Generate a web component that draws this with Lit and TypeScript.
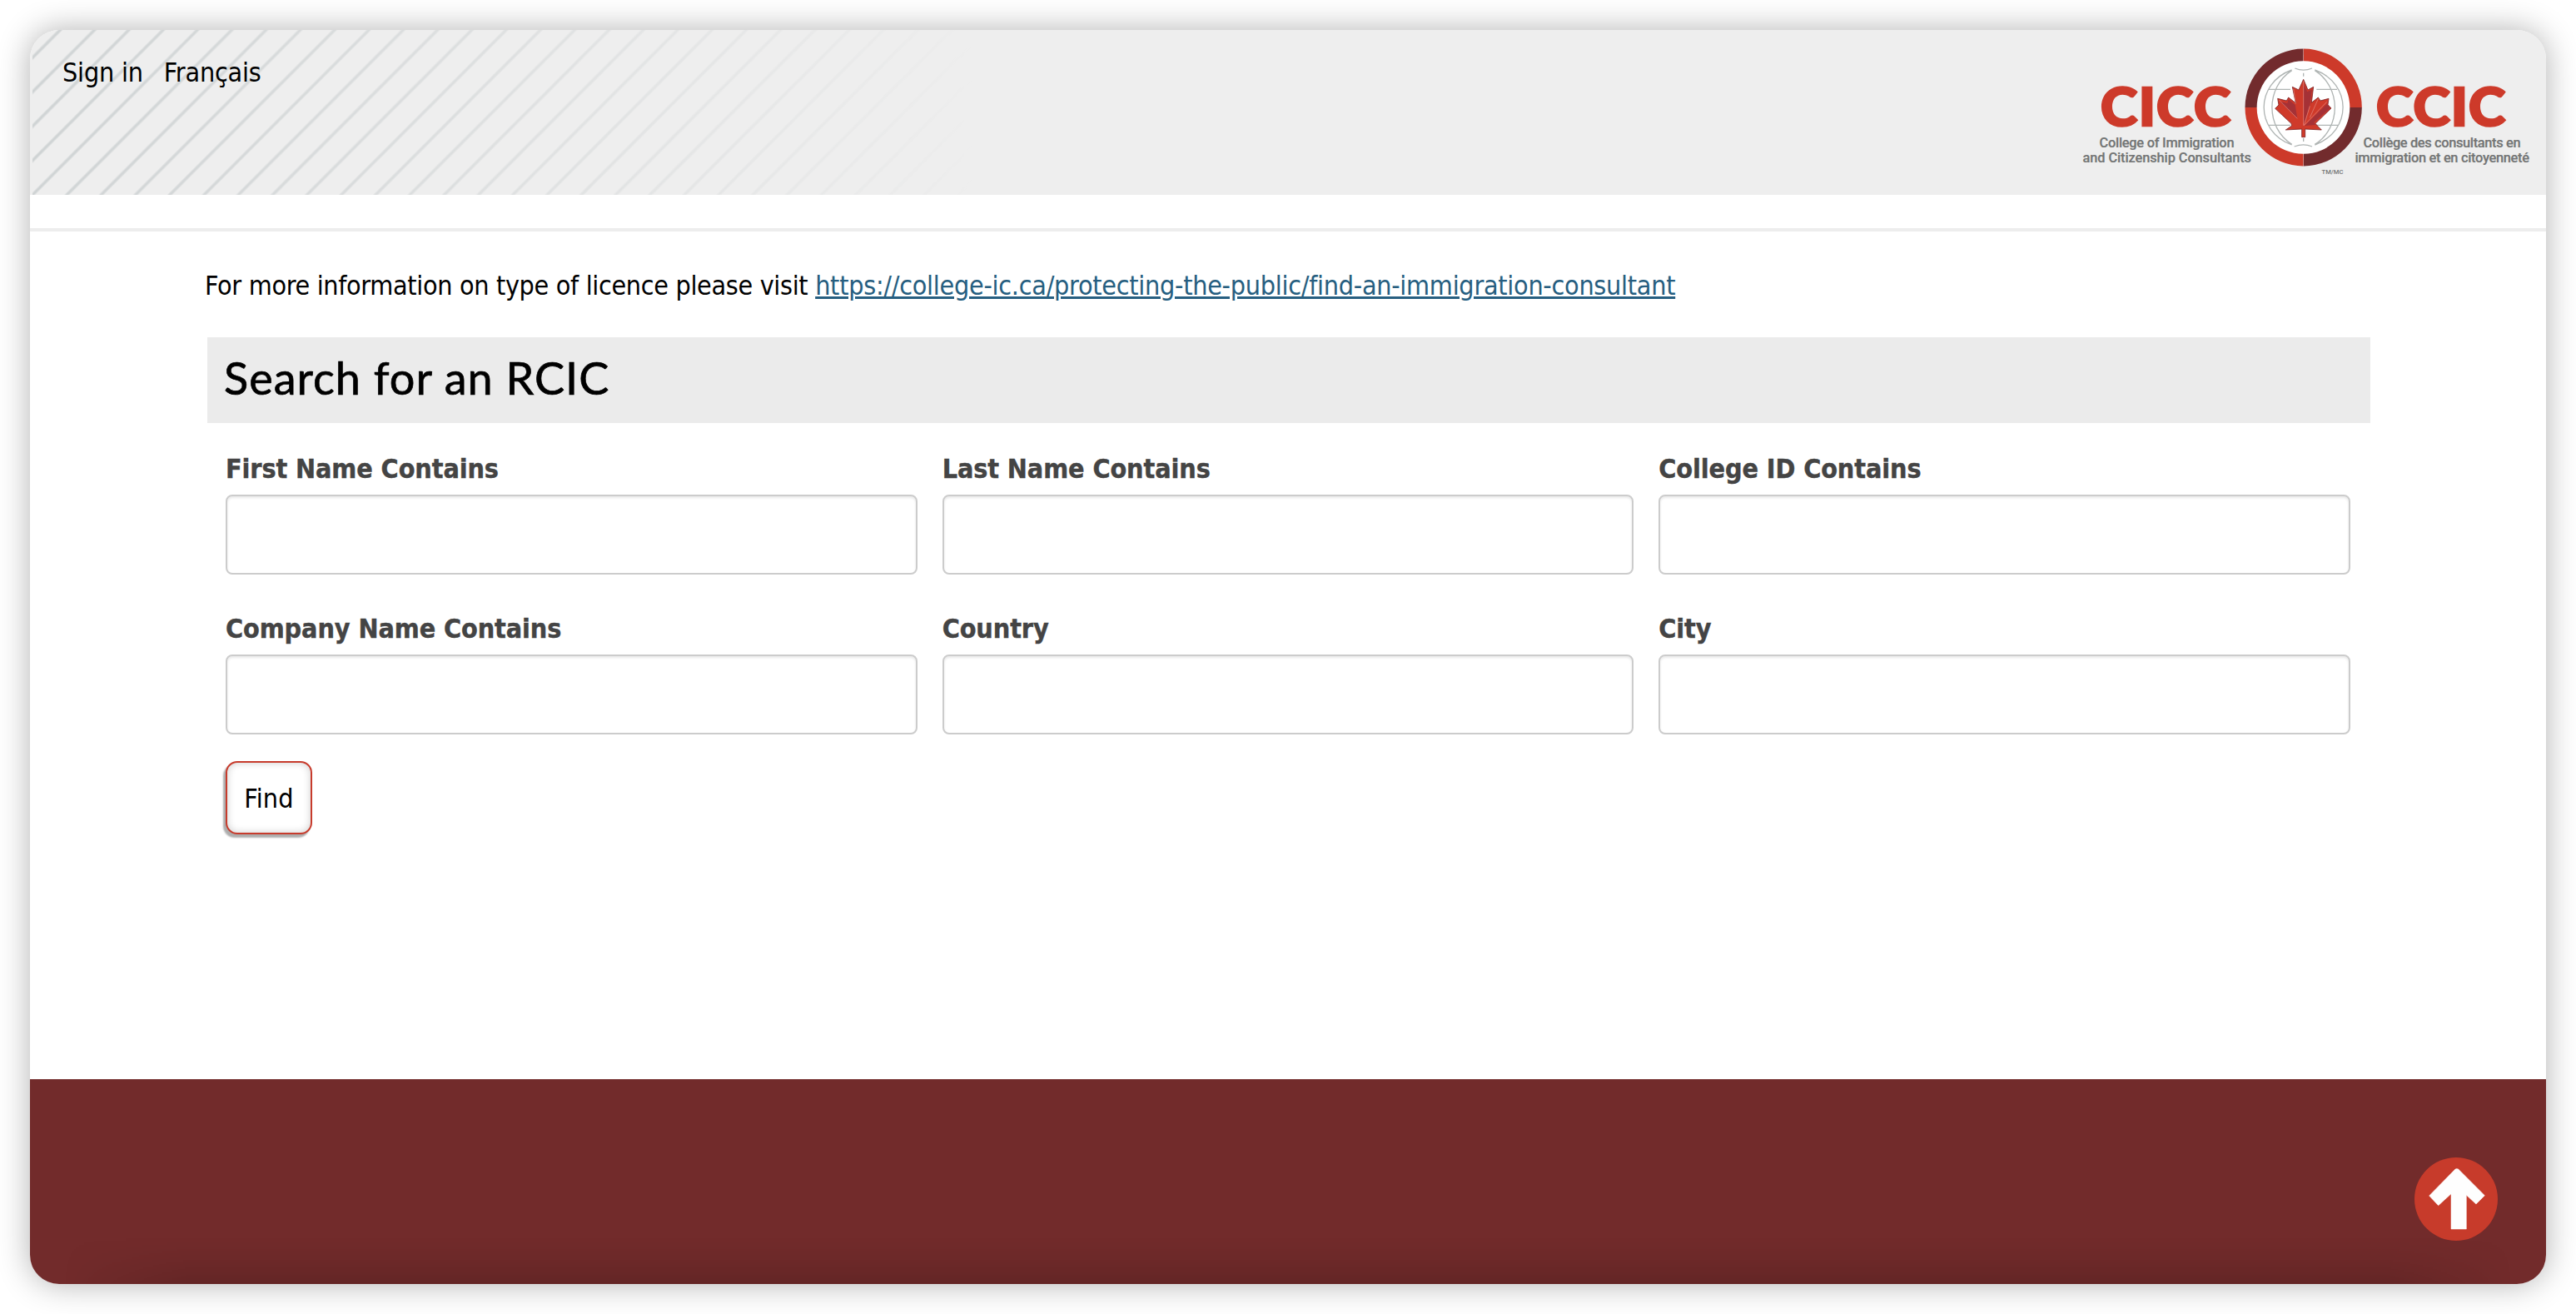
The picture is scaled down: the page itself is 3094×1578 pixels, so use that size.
import { LitElement, html, css, svg } from "lit";
import { customElement, property } from "lit/decorators.js";

@customElement("college-logo")
export class CollegeLogo extends LitElement {
  static styles = css`
    :host { display: block; width: 540px; height: 160px; }
    svg { display: block; }
    .acronym { font: 900 62.5px Lato, sans-serif; fill: #cd3a2a; stroke: #cd3a2a; stroke-width: 2.6; }
    .name { font: 500 16.4px Roboto, sans-serif; fill: #737575; stroke: #737575; stroke-width: 0.2; }
    .mark { font: 500 7.6px Roboto, sans-serif; fill: #737575; }
    .red { fill: #cd3a2a; }
    .dark { fill: #722b2d; }
    .globe { fill: none; stroke: #b0b5b4; stroke-width: 4; }
    .leaf { fill: #cf3a2a; stroke: #7d2426; stroke-width: 2.5; stroke-linejoin: miter; }
    .facet { fill: #a53136; }
    .crease { fill: none; stroke: #e58d84; stroke-width: 2; }
  `;

  private emblem() {
    return svg`
      <g transform="translate(2670 40) scale(0.33333)">
        <circle cx="290" cy="267" r="190" fill="#fff"></circle>
        <path class="dark" d="M79.500 267A210.500 211.500 0 0 1 289.500 55.500V99.500A167.500 167.500 0 0 0 122 267Z"></path>
        <path class="red" d="M290.500 55.500A210.500 211.500 0 0 1 500.500 267H457A167.500 167.500 0 0 0 290.500 99.500Z"></path>
        <path class="dark" d="M500.500 267A210.500 211.500 0 0 1 290.500 478.500V434.500A167.500 167.500 0 0 0 457 267Z"></path>
        <path class="red" d="M289.500 478.500A210.500 211.500 0 0 1 79.500 267H122A167.500 167.500 0 0 0 289.500 434.500Z"></path>
        <path class="globe" d="M248 132C114 180 114 353 248 402M248 134C153 195 153 340 248 400
          M331 132C466 180 466 353 331 402M331 134C427 195 427 340 331 400
          M259 126Q290 139 321 126M257 408Q290 395 321 408
          M164 202H243M337 202H411M163 331H243M337 331H415M290 143V155M290 378V390"></path>
        <path class="leaf" d="M290 166L306 204L326 193L319 250L343 231L351 243L381 235L378 257L390 270L333 325L340 333L355 348L296 345V374H284V345L226 348L248 333L246 325L188 271L201 258L197 235L229 243L236 231L262 251L250 193L273 204Z"></path>
        <path class="facet" d="M290 180L304 211L321 202L313 262L291 329Z"></path>
        <path class="facet" d="M236 238L260 258L268 307L206 246L232 252Z"></path>
        <path class="facet" d="M294 333L376 253L386 270L328 321L334 330Z"></path>
        <path class="crease" d="M290 172V332M268 307L202 240M313 262L292 332L374 247M343 236L313 304M254 200L262 254"></path>
      </g>`;
  }

  render() {
    return html`
      <svg viewBox="2500 40 540 160" width="540" height="160" overflow="visible" role="img">
        ${this.emblem()}
        <text class="acronym" transform="translate(2523 151.300) scale(1.07 1)" x="0 42.700 62.600 104.700">CICC</text>
        <text class="acronym" transform="translate(2854 151.300) scale(1.07 1)" x="0 41.600 83.800 103.700">CCIC</text>
        <text class="name" x="2521.500" y="176.500" textLength="162">College of Immigration</text>
        <text class="name" x="2501.500" y="195.200" textLength="202.500">and Citizenship Consultants</text>
        <text class="name" x="2838.500" y="176.500" textLength="189">Collège des consultants en</text>
        <text class="name" x="2828.500" y="195.200" textLength="209.500">immigration et en citoyenneté</text>
        <text class="mark" x="2788.500" y="209" textLength="26">TM/MC</text>
      </svg>`;
  }
}

@customElement("search-field")
export class SearchField extends LitElement {
  @property() label = "";

  static styles = css`
    :host { display: block; }
    .label {
      display: block; font-weight: 700; color: #444; margin-bottom: 11px; letter-spacing: -0.1px;
      -webkit-text-stroke: 0.4px #444;
    }
    .input {
      display: block; box-sizing: border-box; width: 100%; height: 96px; margin: 0; padding: 0 24px;
      border: 2px solid #ccc; border-radius: 8px; background: #fff; font: inherit; outline: none;
      box-shadow: inset 0 2px 3px rgba(0, 0, 0, 0.09);
    }
  `;

  render() {
    return html`<label class="label" for="field">${this.label}</label><input class="input" id="field" type="text" />`;
  }
}

@customElement("app-root")
export class AppRoot extends LitElement {
  static styles = css`
    :host {
      display: block; box-sizing: border-box; width: 3094px; height: 1578px; padding: 36px; overflow: hidden;
      background: #fff; color: #000;
      font: 32px/40px "DejaVu Sans Condensed", "DejaVu Sans", sans-serif; font-stretch: condensed;
    }
    .window {
      display: flex; flex-direction: column; height: 1506px; border-radius: 35px; background: #fff;
      box-shadow: 0 0 38px rgba(0, 0, 0, 0.31);
    }
    .header {
      position: relative; display: flex; justify-content: space-between; height: 198px; background: #eee;
      border-radius: 35px 35px 0 0; overflow: hidden;
    }
    .stripes {
      position: absolute; left: 3px; top: 0; width: 1130px; height: 198px;
      background: repeating-linear-gradient(135deg, transparent 0 20.8px, #cfd3d4 22.800px 24.300px, transparent 26.300px 29.13px);
      -webkit-mask-image: linear-gradient(to right, #000, rgba(0, 0, 0, 0.5) 50%, transparent);
      mask-image: linear-gradient(to right, #000, rgba(0, 0, 0, 0.5) 50%, transparent);
    }
    .nav { position: relative; display: flex; gap: 25px; padding: 31px 0 0 39px; }
    .nav-link { color: #000; text-decoration: none; letter-spacing: -0.2px; }
    .logo { margin: 4px 18px 0 0; position: relative; }
    .rule { height: 4px; margin-top: 40px; background: #ededed; }
    .main { display: flex; flex-direction: column; flex: 1; padding: 45px 211px 0 213px; }
    .intro { margin: 0 0 42px -3px; white-space: nowrap; letter-spacing: -0.33px; }
    .intro-link {
      color: #265e80; letter-spacing: -0.27px; text-decoration: underline;
      text-decoration-thickness: 3px; text-underline-offset: 2px;
    }
    .title {
      box-sizing: border-box; height: 103px; margin: 0; padding: 0 0 6px 20px; background: #ebebeb;
      font: 400 54px/98px Lato, sans-serif; font-stretch: normal; letter-spacing: 1px;
      -webkit-text-stroke: 0.7px #000;
    }
    .fields { display: grid; grid-template-columns: repeat(3, 1fr); gap: 45px 30px; padding: 35px 24px 0 22px; }
    .find {
      align-self: flex-start; box-sizing: border-box; width: 104px; height: 88px; margin: 32px 0 0 22px; padding: 2px 0 0;
      border: 2px solid #c73b2c; border-radius: 14px; background: #fff; color: #000; font: inherit;
      letter-spacing: 0.2px; box-shadow: -3px 4px 2px rgba(0, 0, 0, 0.32), inset 0 0 10px rgba(0, 0, 0, 0.2);
    }
    .footer {
      position: relative; display: flex; justify-content: flex-end; height: 246px; background: #722b2b;
      border-radius: 0 0 35px 35px; overflow: hidden;
    }
    .shade {
      position: absolute; left: 40px; right: 40px; bottom: 0; height: 56px;
      background: linear-gradient(to bottom, transparent, rgba(0, 0, 0, 0.04) 45%, rgba(0, 0, 0, 0.12));
      -webkit-mask-image: linear-gradient(to right, transparent, #000 150px calc(100% - 150px), transparent);
      mask-image: linear-gradient(to right, transparent, #000 150px calc(100% - 150px), transparent);
    }
    .top { position: relative; width: 100px; height: 100px; margin: 94px 58px 0 0; padding: 0; border: 0; background: none; }
    .top-icon { display: block; }
  `;

  private fields = [
    "First Name Contains", "Last Name Contains", "College ID Contains",
    "Company Name Contains", "Country", "City",
  ];

  render() {
    return html`
      <div class="window">
        <header class="header">
          <div class="stripes"></div>
          <nav class="nav">
            <a class="nav-link">Sign in</a>
            <a class="nav-link">Français</a>
          </nav>
          <college-logo class="logo"></college-logo>
        </header>
        <div class="rule"></div>
        <main class="main">
          <p class="intro">For more information on type of licence please visit <a class="intro-link">https://college-ic.ca/protecting-the-public/find-an-immigration-consultant</a></p>
          <h1 class="title">Search for an RCIC</h1>
          <div class="fields">
            ${this.fields.map((label) => html`<search-field .label=${label}></search-field>`)}
          </div>
          <button class="find" type="button">Find</button>
        </main>
        <footer class="footer">
          <div class="shade"></div>
          <button class="top" type="button">
            <svg class="top-icon" viewBox="0 0 300 300" width="100" height="100">
              <circle cx="150" cy="150" r="150" fill="#c73b2b"></circle>
              <path d="M147 42Q152 39 158 42L253 137L222 168L187 136V258H132V131L86 173L53 138Z" fill="#fefefe" stroke="#fefefe" stroke-width="1.500" stroke-linejoin="round"></path>
            </svg>
          </button>
        </footer>
      </div>`;
  }
}
